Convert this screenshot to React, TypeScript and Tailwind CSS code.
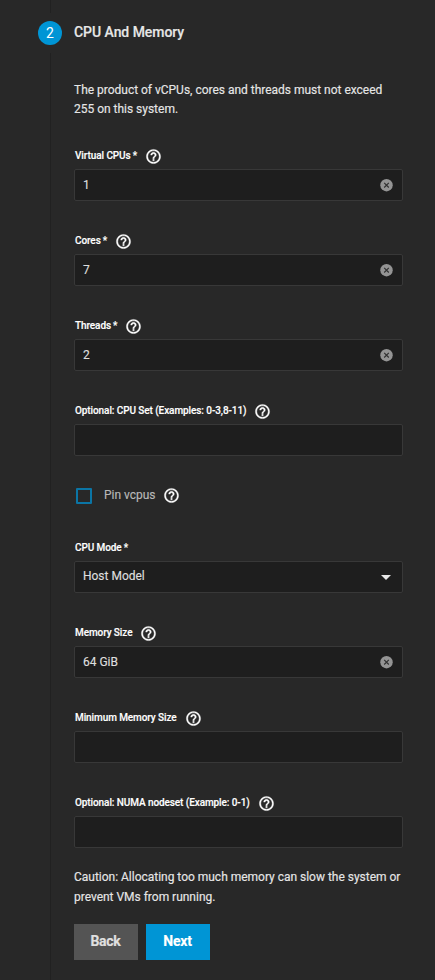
import React from "react";

function HelpIcon() {
  return (
    <svg viewBox="0 0 24 24" className="size-[17px] shrink-0 fill-white stroke-white stroke-[0.5]">
      <path d="M11 18h2v-2h-2v2zm1-16C6.48 2 2 6.48 2 12s4.48 10 10 10 10-4.48 10-10S17.52 2 12 2zm0 18c-4.41 0-8-3.59-8-8s3.59-8 8-8 8 3.59 8 8-3.59 8-8 8zm0-14c-2.21 0-4 1.79-4 4h2c0-1.1.9-2 2-2s2 .9 2 2c0 2-3 1.75-3 5h2c0-2.25 3-2.5 3-5 0-2.21-1.79-4-4-4z" />
    </svg>
  );
}

function ClearIcon() {
  return (
    <svg viewBox="0 0 13 13" className="size-[13px] shrink-0">
      <circle cx="6.5" cy="6.2" r="6.2" fill="#949494" />
      <path d="M4.2 3.9l4.6 4.6M8.8 3.9L4.2 8.5" stroke="#303030" strokeWidth="1.1" />
    </svg>
  );
}

interface FieldProps {
  label: string;
  required?: boolean;
  help?: boolean;
  value?: string;
  select?: boolean;
}

function Field({ label, required, help = true, value, select }: FieldProps) {
  return (
    <div className="mb-[27px]">
      <div className="flex h-[26px] items-center pb-px pl-px text-[10px] font-medium tracking-[-0.09px] text-white">
        <span className="whitespace-nowrap">{label}</span>
        {required && <span className="-mr-0.5 ml-0.5">*</span>}
        {help && (
          <span className={required ? "mt-px ml-2.5" : "mt-px ml-2"}>
            <HelpIcon />
          </span>
        )}
      </div>
      <div className="flex h-8 items-center justify-between rounded-[2px] border border-[#383838] bg-[#1e1e1e] pr-[9px] pl-2 text-[12px] text-[#dedede]">
        <span className={select ? "-mt-0.5" : ""}>{value}</span>
        {value && !select && <ClearIcon />}
        {select && (
          <svg viewBox="0 0 10 5" className="mr-0.5 h-[5px] w-2.5 fill-[#e8e8e8]">
            <path d="M0 0h10L5 5z" />
          </svg>
        )}
      </div>
    </div>
  );
}

export default function App() {
  return (
    <div className="flex h-[980px] w-[435px] overflow-hidden bg-[#282828] font-['Roboto',sans-serif]">
      <div className="ml-[38px] flex w-6 shrink-0 flex-col items-center">
        <div className="ml-px h-[13px] w-px bg-[#212121]" />
        <div className="my-2 flex size-6 shrink-0 items-center justify-center rounded-full bg-[#0095d5] text-[14px] text-white">
          2
        </div>
        <div className="ml-px w-px flex-1 bg-[#212121]" />
      </div>
      <main className="ml-3 w-[329px] shrink-0 text-[12px] tracking-[-0.015px] text-[#e6e6e6] [-webkit-text-stroke:0.15px_currentColor]">
        <h2 className="mt-[21px] h-[60px] text-[14px] leading-[22px] font-medium tracking-[-0.05px]">
          CPU And Memory
        </h2>
        <p className="h-[62px] leading-[19px]">
          The product of vCPUs, cores and threads must not exceed
          <br />
          255 on this system.
        </p>
        <Field label="Virtual CPUs" required value="1" />
        <Field label="Cores" required value="7" />
        <Field label="Threads" required value="2" />
        <Field label="Optional: CPU Set (Examples: 0-3,8-11)" />
        <div className="flex h-[52px] items-start pt-[5px] pl-0.5 text-[#b8b8b8]">
          <span className="size-4 rounded-[1px] border-2 border-[#0b75a5]" />
          <span className="-mt-px ml-3 leading-4">Pin vcpus</span>
          <span className="-mt-px ml-[7px]">
            <HelpIcon />
          </span>
        </div>
        <Field label="CPU Mode" required help={false} value="Host Model" select />
        <Field label="Memory Size" value="64 GiB" />
        <Field label="Minimum Memory Size" />
        <Field label="Optional: NUMA nodeset (Example: 0-1)" />
        <p className="-mt-2 leading-5 whitespace-nowrap">
          Caution: Allocating too much memory can slow the system or
          <br />
          prevent VMs from running.
        </p>
        <div className="mt-[17px] flex gap-2 text-[14px] font-bold tracking-[-0.25px]">
          <button className="h-9 w-16 bg-[#545454] pr-px pb-0.5 text-[#e0e0e0]">Back</button>
          <button className="h-9 w-16 bg-[#0095d5] pr-px pb-0.5 text-white">Next</button>
        </div>
      </main>
    </div>
  );
}
